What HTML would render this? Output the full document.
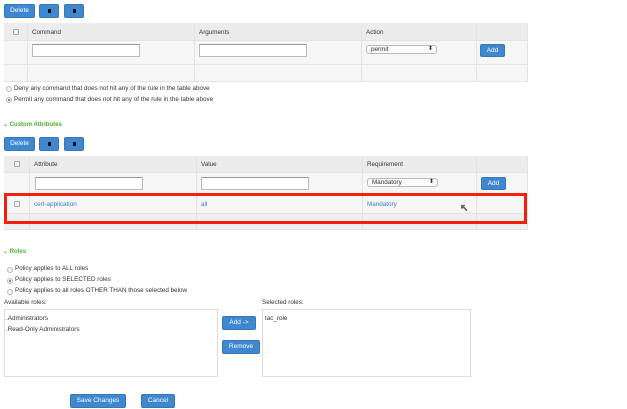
<!DOCTYPE html>
<html><head><style>
*{margin:0;padding:0;box-sizing:border-box}
body{width:627px;height:409px;background:#fff;font-family:"Liberation Sans",sans-serif;font-size:6.3px;color:#333;position:relative;overflow:hidden}
.a{position:absolute}
.btn{position:absolute;background:#3f88cf;color:#fff;border-radius:2px;font-size:6.5px;text-align:center;line-height:12px;height:14px;border:1px solid #3578b8}
.ar{position:absolute;background:#3f88cf;border-radius:2px;height:14px;width:20px;border:1px solid #3578b8}
.ar:after{content:"";position:absolute;left:8px;top:4px;width:3px;height:4px;background:#000;border-radius:1px}
.cell{position:absolute;border-right:1px solid #e3e3e3;border-bottom:1px solid #e3e3e3}
.h{background:#ececec}.r{background:#f6f6f6}
.inp{position:absolute;background:#fff;border:1px solid #bbb;border-top-color:#999;height:13px}
.sel{position:absolute;background:#fafafa;border:1px solid #bbb;border-radius:3px;height:9px;font-size:6.3px;line-height:7px;padding-left:4px}
.sel:after{content:"⬍";position:absolute;right:3px;top:0;font-size:6px}
.rad{position:absolute;width:6px;height:6px;border:1px solid #bbb;border-radius:50%;background:#f3f3f3}
.rad.on:after{content:"";position:absolute;left:1px;top:1px;width:2px;height:2px;background:#666;border-radius:50%}
.cb{position:absolute;width:6px;height:6px;border:1px solid #aaa;border-radius:1px;background:#eee}
.g{color:#4caf2f;font-size:6px;font-weight:bold}
.lnk{color:#3a7fc4}
.box{position:absolute;border:1px solid #ddd;background:#fff}
</style></head><body>
<div class="btn" style="left:4px;top:4px;width:31px">Delete</div>
<div class="ar" style="left:39px;top:4px"></div>
<div class="ar" style="left:64px;top:4px"></div>

<div class="cell h" style="left:4px;top:23px;width:24px;height:18px"></div>
<div class="cb" style="left:13px;top:29px"></div>
<div class="cell h" style="left:28px;top:23px;width:167px;height:18px;padding:6px 4px">Command</div>
<div class="cell h" style="left:195px;top:23px;width:167px;height:18px;padding:6px 4px">Arguments</div>
<div class="cell h" style="left:362px;top:23px;width:115px;height:18px;padding:6px 4px">Action</div>
<div class="cell h" style="left:477px;top:23px;width:51px;height:18px"></div>
<div class="cell r" style="left:4px;top:41px;width:24px;height:24px"></div>
<div class="cell r" style="left:28px;top:41px;width:167px;height:24px"></div>
<div class="cell r" style="left:195px;top:41px;width:167px;height:24px"></div>
<div class="cell r" style="left:362px;top:41px;width:115px;height:24px"></div>
<div class="cell r" style="left:477px;top:41px;width:51px;height:24px"></div>
<div class="inp" style="left:32px;top:44px;width:108px"></div>
<div class="inp" style="left:199px;top:44px;width:108px"></div>
<div class="sel" style="left:366px;top:45px;width:71px">permit</div>
<div class="btn" style="left:480px;top:44px;width:25px;height:13px;line-height:11px">Add</div>
<div class="cell r" style="left:4px;top:65px;width:24px;height:17px"></div>
<div class="cell r" style="left:28px;top:65px;width:167px;height:17px"></div>
<div class="cell r" style="left:195px;top:65px;width:167px;height:17px"></div>
<div class="cell r" style="left:362px;top:65px;width:115px;height:17px"></div>
<div class="cell r" style="left:477px;top:65px;width:51px;height:17px"></div>

<div class="rad" style="left:6px;top:86px"></div><div class="a" style="left:14px;top:85px">Deny any command that does not hit any of the rule in the table above</div>
<div class="rad on" style="left:6px;top:97px"></div><div class="a" style="left:14px;top:96px">Permit any command that does not hit any of the rule in the table above</div>
<div class="a g" style="left:3px;top:121px">&#x2304; Custom Attributes</div>

<div class="btn" style="left:4px;top:137px;width:31px">Delete</div>
<div class="ar" style="left:39px;top:137px"></div>
<div class="ar" style="left:64px;top:137px"></div>

<div class="cell h" style="left:4px;top:156px;width:26px;height:17px"></div>
<div class="cb" style="left:14px;top:161px"></div>
<div class="cell h" style="left:30px;top:156px;width:167px;height:17px;padding:5px 4px">Attribute</div>
<div class="cell h" style="left:197px;top:156px;width:166px;height:17px;padding:5px 4px">Value</div>
<div class="cell h" style="left:363px;top:156px;width:114px;height:17px;padding:5px 4px">Requirement</div>
<div class="cell h" style="left:477px;top:156px;width:51px;height:17px"></div>
<div class="cell r" style="left:4px;top:173px;width:26px;height:21px"></div>
<div class="cell r" style="left:30px;top:173px;width:167px;height:21px"></div>
<div class="cell r" style="left:197px;top:173px;width:166px;height:21px"></div>
<div class="cell r" style="left:363px;top:173px;width:114px;height:21px"></div>
<div class="cell r" style="left:477px;top:173px;width:51px;height:21px"></div>
<div class="inp" style="left:35px;top:177px;width:108px"></div>
<div class="inp" style="left:201px;top:177px;width:108px"></div>
<div class="sel" style="left:367px;top:178px;width:71px">Mandatory</div>
<div class="btn" style="left:481px;top:177px;width:25px;height:13px;line-height:11px">Add</div>
<div class="cell r" style="left:4px;top:194px;width:26px;height:20px"></div>
<div class="cell r" style="left:30px;top:194px;width:167px;height:20px;padding:7px 4px"><span class="lnk">cert-application</span></div>
<div class="cell r" style="left:197px;top:194px;width:166px;height:20px;padding:7px 4px"><span class="lnk">all</span></div>
<div class="cell r" style="left:363px;top:194px;width:114px;height:20px;padding:7px 4px"><span class="lnk">Mandatory</span></div>
<div class="cell r" style="left:477px;top:194px;width:51px;height:20px"></div>
<div class="cb" style="left:14px;top:201px;background:#f3f3f3"></div>
<div class="cell" style="left:4px;top:214px;width:26px;height:16px;background:#efefef"></div>
<div class="cell" style="left:30px;top:214px;width:167px;height:16px;background:#efefef"></div>
<div class="cell" style="left:197px;top:214px;width:166px;height:16px;background:#efefef"></div>
<div class="cell" style="left:363px;top:214px;width:114px;height:16px;background:#efefef"></div>
<div class="cell" style="left:477px;top:214px;width:51px;height:16px;background:#efefef"></div>
<div class="a" style="left:4px;top:193px;width:523px;height:31px;border:3px solid #f0200c"></div>
<div class="a" style="left:460px;top:203px;font-size:10px;color:#fff;-webkit-text-stroke:0.6px #333">&#x2196;</div>

<div class="a g" style="left:3px;top:248px">&#x2304; Roles</div>
<div class="rad" style="left:7px;top:267px"></div><div class="a" style="left:15px;top:265px">Policy applies to ALL roles</div>
<div class="rad on" style="left:7px;top:278px"></div><div class="a" style="left:15px;top:276px">Policy applies to SELECTED roles</div>
<div class="rad" style="left:7px;top:289px"></div><div class="a" style="left:15px;top:287px">Policy applies to all roles OTHER THAN those selected below</div>
<div class="a" style="left:4px;top:299px">Available roles:</div>
<div class="box" style="left:4px;top:309px;width:214px;height:68px"></div>
<div class="a" style="left:6px;top:315px">.Administrators</div>
<div class="a" style="left:6px;top:326px">.Read-Only Administrators</div>
<div class="btn" style="left:222px;top:316px;width:34px">Add -&gt;</div>
<div class="btn" style="left:222px;top:340px;width:38px">Remove</div>
<div class="a" style="left:262px;top:299px">Selected roles:</div>
<div class="box" style="left:262px;top:309px;width:209px;height:68px"></div>
<div class="a" style="left:265px;top:315px">tac_role</div>
<div class="btn" style="left:70px;top:394px;width:56px">Save Changes</div>
<div class="btn" style="left:141px;top:394px;width:34px">Cancel</div>
</body></html>
